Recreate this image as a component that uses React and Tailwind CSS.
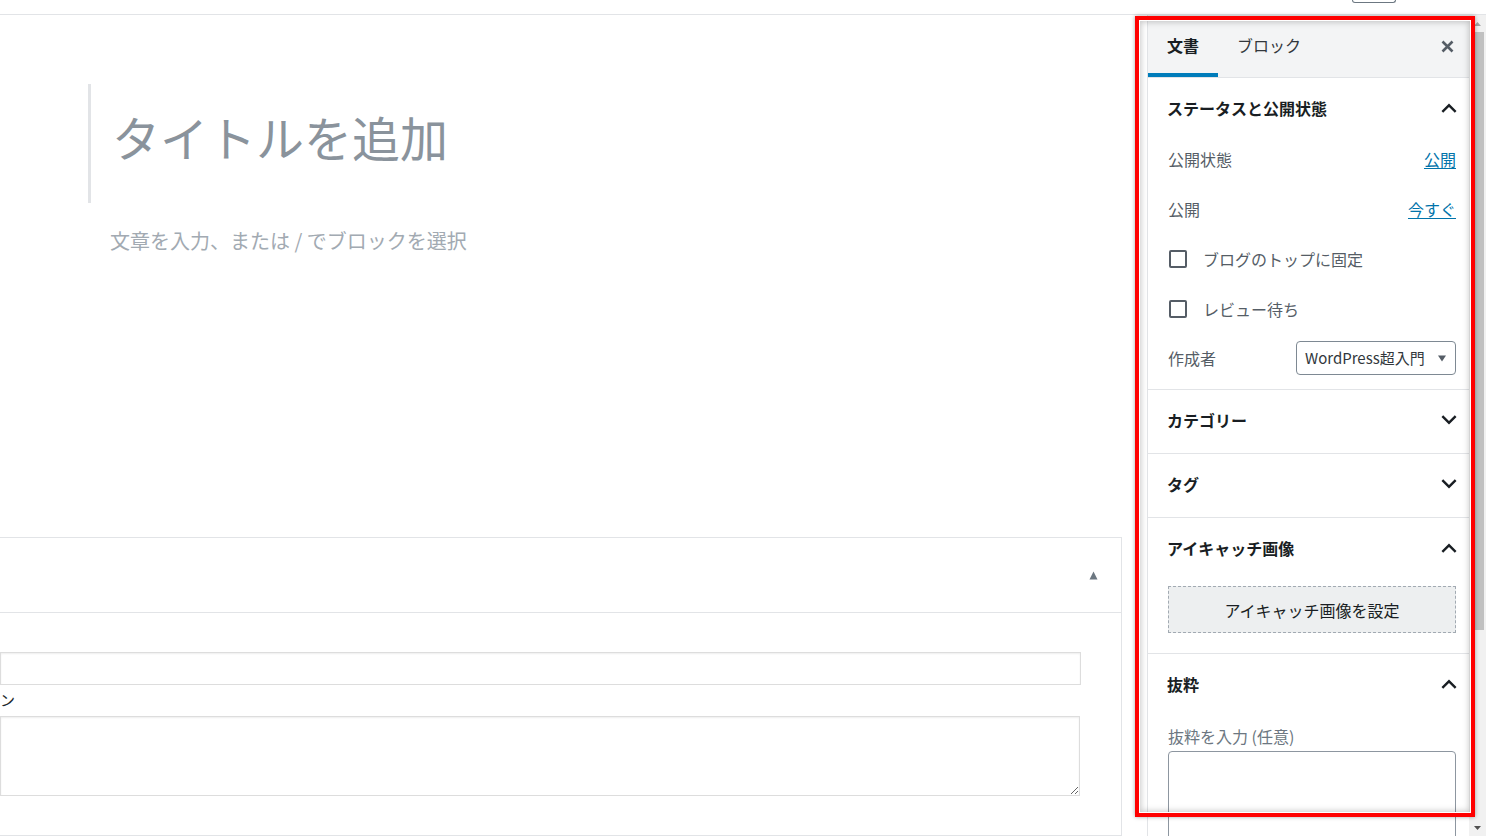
import React from "react";

const ChevronUp = () => (
  <svg width="16" height="10" viewBox="0 0 16 10" className="shrink-0 mr-[-1px]">
    <path d="M8 0.6 L15.5 8.1 L13.8 9.8 L8 4 L2.2 9.8 L0.5 8.1 Z" fill="#191e23" />
  </svg>
);

const ChevronDown = () => (
  <svg width="16" height="10" viewBox="0 0 16 10" className="shrink-0 mr-[-1px]">
    <path d="M8 9.4 L15.5 1.9 L13.8 0.2 L8 6 L2.2 0.2 L0.5 1.9 Z" fill="#191e23" />
  </svg>
);

const PanelHeader = ({ title, open }) => (
  <div className="h-[63px] pb-[3px] flex items-center justify-between">
    <span className="-ml-[1px] text-[16px] font-bold text-[#191e23]">{title}</span>
    {open ? <ChevronUp /> : <ChevronDown />}
  </div>
);

const Checkbox = ({ label }) => (
  <div className="h-[36px] shrink-0 flex items-center">
    <span className="ml-[1px] w-[18px] h-[18px] shrink-0 border-2 border-[#555d66] rounded-[2px] bg-white" />
    <span className="ml-[16px] text-[16px] text-[#555d66]">{label}</span>
  </div>
);

export default function App() {
  return (
    <div
      className="relative w-[1486px] h-[836px] overflow-hidden bg-white"
      style={{ fontFamily: '"Noto Sans CJK JP", "Noto Sans", sans-serif' }}
    >
      {/* top bar */}
      <div className="h-[15px] border-b border-[#e2e4e7] pl-[1352px]">
        <div className="w-[44px] h-[3px] border-x border-b border-[#6c7781] rounded-b-[3px]" />
      </div>

      <div className="flex h-[821px]">
        {/* editor column */}
        <div className="w-[1147px] shrink-0 flex flex-col">
          <div className="h-[522px] shrink-0 pt-[69px]">
            <div className="ml-[88px] h-[119px] border-l-[3px] border-[#e2e4e7] flex items-center pl-[21px] pb-[16px]">
              <span className="text-[48px] leading-none text-[#8a939c]">
                タイトルを追加
              </span>
            </div>
            <div className="ml-[110px] mt-[24px] text-[20px] leading-[28px] text-[#a2aab2]">
              文章を入力、または / でブロックを選択
            </div>
          </div>

          {/* meta boxes */}
          <div className="w-[1122px] flex-1 border-t border-r border-b border-[#e2e4e7] flex flex-col">
            <div className="h-[75px] shrink-0 border-b border-[#e2e4e7] flex items-center justify-end pr-[23px]">
              <svg width="9" height="9" viewBox="0 0 9 9">
                <path d="M4.5 0.5 L8.5 8.5 L0.5 8.5 Z" fill="#6c7781" />
              </svg>
            </div>
            <div className="pt-[39px]">
              <div className="w-[1081px] h-[33px] border border-[#dddddd] shadow-[inset_0_1px_2px_rgba(0,0,0,0.07)]" />
              <div className="h-[31px] flex items-center text-[15px] text-[#23282d]">ン</div>
              <textarea
                readOnly
                className="block w-[1080px] h-[80px] border border-[#dddddd] shadow-[inset_0_1px_2px_rgba(0,0,0,0.07)] outline-none"
              />
            </div>
          </div>
        </div>

        {/* sidebar */}
        <div className="w-[322px] shrink-0 border-l border-[#e2e4e7] flex flex-col overflow-hidden">
          <div className="h-[63px] shrink-0 bg-[#f3f4f5] border-b border-[#e2e4e7] flex items-stretch">
            <div className="px-[19px] pb-[2px] flex items-center text-[16px] font-bold text-[#191e23] shadow-[inset_0_-4px_0_#007cba]">
              文書
            </div>
            <div className="px-[19px] pb-[2px] flex items-center text-[16px] text-[#32373c]">ブロック</div>
            <div className="ml-auto pr-[15px] flex items-center">
              <svg width="13" height="13" viewBox="0 0 13 13">
                <path d="M1.5 1.5 L11.5 11.5 M11.5 1.5 L1.5 11.5" stroke="#555d66" strokeWidth="2.6" />
              </svg>
            </div>
          </div>

          {/* status panel */}
          <div className="shrink-0 pl-[20px] pr-[13px] border-b border-[#e2e4e7]">
            <PanelHeader title="ステータスと公開状態" open />
            <div className="pb-[14px] flex flex-col gap-[14px]">
              <div className="h-[36px] shrink-0 flex items-center justify-between text-[16px]">
                <span className="text-[#555d66]">公開状態</span>
                <span className="text-[#0073aa] underline underline-offset-2">公開</span>
              </div>
              <div className="h-[36px] shrink-0 flex items-center justify-between text-[16px]">
                <span className="text-[#555d66]">公開</span>
                <span className="text-[#0073aa] underline underline-offset-2">今すぐ</span>
              </div>
              <Checkbox label="ブログのトップに固定" />
              <Checkbox label="レビュー待ち" />
              <div className="h-[34px] shrink-0 flex items-center justify-between text-[16px]">
                <span className="text-[#555d66]">作成者</span>
                <div className="w-[160px] h-[34px] border border-[#7e8993] rounded-[4px] flex items-center justify-between pl-[8px] pr-[9px]">
                  <span className="text-[15px] text-[#32373c]">WordPress超入門</span>
                  <svg width="8" height="7" viewBox="0 0 8 7">
                    <path d="M0 0.5 L8 0.5 L4 6.5 Z" fill="#555d66" />
                  </svg>
                </div>
              </div>
            </div>
          </div>

          <div className="shrink-0 pl-[20px] pr-[13px] border-b border-[#e2e4e7]">
            <PanelHeader title="カテゴリー" />
          </div>
          <div className="shrink-0 pl-[20px] pr-[13px] border-b border-[#e2e4e7]">
            <PanelHeader title="タグ" />
          </div>

          <div className="shrink-0 pl-[20px] pr-[13px] border-b border-[#e2e4e7]">
            <PanelHeader title="アイキャッチ画像" open />
            <div className="pt-[5px] pb-[20px]">
              <div className="h-[47px] bg-[#edeff0] border border-dashed border-[#a2aab2] flex items-center justify-center text-[16px] text-[#191e23]">
                アイキャッチ画像を設定
              </div>
            </div>
          </div>

          <div className="shrink-0 pl-[20px] pr-[13px]">
            <PanelHeader title="抜粋" open />
            <div className="pt-[9px]">
              <div className="h-[20px] leading-[20px] text-[16px] text-[#6c7781]">抜粋を入力 (任意)</div>
              <textarea
                readOnly
                className="block mt-[5px] w-full h-[100px] border border-[#8d96a0] rounded-[4px] resize-none outline-none"
              />
            </div>
          </div>
        </div>

        {/* scrollbar */}
        <div className="w-[17px] shrink-0 bg-[#f1f1f1] flex flex-col">
          <div className="h-[17px] shrink-0 flex items-center justify-center">
            <svg width="7" height="4" viewBox="0 0 7 4">
              <path d="M3.5 0 L7 4 L0 4 Z" fill="#a3a3a3" />
            </svg>
          </div>
          <div className="mx-[2px] h-[598px] shrink-0 bg-[#c1c1c1]" />
          <div className="flex-1" />
          <div className="h-[17px] shrink-0 flex items-center justify-center">
            <svg width="7" height="4" viewBox="0 0 7 4">
              <path d="M0 0 L7 0 L3.5 4 Z" fill="#505050" />
            </svg>
          </div>
        </div>
      </div>

      {/* red highlight annotation */}
      <div className="absolute left-[1135px] top-[16px] w-[340px] h-[801px] border-[4px] border-[#ff0000] shadow-[0_0_4px_rgba(0,0,0,0.35),inset_0_0_0_1px_#ffffff,inset_0_0_6px_2px_rgba(0,0,0,0.22)] pointer-events-none" />
    </div>
  );
}
